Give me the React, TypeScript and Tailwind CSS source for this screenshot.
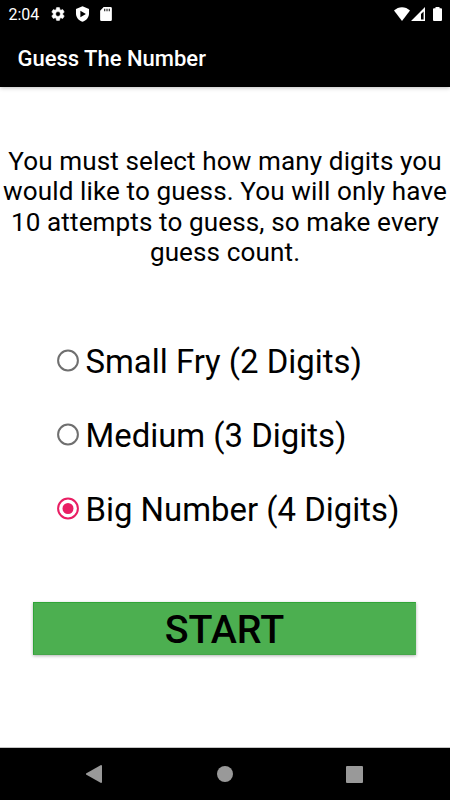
import { useState } from 'react';

const options = [
  { id: 'small', label: 'Small Fry (2 Digits)' },
  { id: 'medium', label: 'Medium (3 Digits)' },
  { id: 'big', label: 'Big Number (4 Digits)' },
];

function StatusBar() {
  return (
    <div className="flex h-[28px] items-center bg-black text-white">
      <span className="ml-[8.5px] w-[32px] pt-px text-[16px]">2:04</span>
      <svg className="ml-[9.5px] size-4" viewBox="0 0 24 24" fill="currentColor">
        <path
          fillRule="evenodd"
          stroke="currentColor"
          strokeWidth="0.8"
          d="M19.14 12.94a7 7 0 0 0 .06-.94 7 7 0 0 0-.07-.94l2.03-1.58a.5.5 0 0 0 .12-.61l-1.92-3.32a.5.5 0 0 0-.59-.22l-2.39.96a7 7 0 0 0-1.62-.94l-.36-2.54a.5.5 0 0 0-.48-.41h-3.84a.5.5 0 0 0-.47.41l-.36 2.54a7 7 0 0 0-1.62.94l-2.39-.96a.5.5 0 0 0-.59.22L2.74 8.87a.5.5 0 0 0 .12.61l2.03 1.58a7 7 0 0 0 0 1.88l-2.03 1.58a.5.5 0 0 0-.12.61l1.92 3.32c.12.22.37.29.59.22l2.39-.96c.5.38 1.03.7 1.62.94l.36 2.54c.05.24.24.41.48.41h3.84c.24 0 .44-.17.47-.41l.36-2.54a7 7 0 0 0 1.62-.94l2.39.96c.22.08.47 0 .59-.22l1.92-3.32a.5.5 0 0 0-.12-.61zM12 15.6A3.6 3.6 0 1 1 12 8.4a3.6 3.6 0 0 1 0 7.2z"
        />
      </svg>
      <svg className="ml-2 h-4 w-[17px]" viewBox="0 0 24 24" preserveAspectRatio="none" fill="currentColor" fillRule="evenodd">
        <path d="M12 .5 2.8 4.5v6.7c0 5.7 3.9 11 9.2 12.3 5.3-1.3 9.2-6.6 9.2-12.3V4.5zM9 7.2v9.6l7.8-4.8z" />
      </svg>
      <svg className="ml-[7px] h-4 w-4" viewBox="0 0 24 24" preserveAspectRatio="none" fill="currentColor">
        <path d="M18.8 1.5H8.5L3.2 7v13.5a2 2 0 0 0 2 2h13.6a2 2 0 0 0 2-2v-17a2 2 0 0 0-2-2z" />
        <path fill="#000" fillOpacity="0.75" d="M9 4h2v4H9zM12.5 4h2v4h-2zM16 4h2v4h-2z" />
      </svg>
      <svg className="ml-auto h-[14px] w-4" viewBox="0 0 16 14" fill="currentColor">
        <path d="M8 14 0 3.6C4.5-.9 11.5-.9 16 3.6z" />
      </svg>
      <svg className="ml-[1px] size-[14px]" viewBox="0 0 14 14" fill="currentColor" fillRule="evenodd">
        <path d="M14 0v14H0zM12.6 4.5 10 7v5.6h2.6z" />
      </svg>
      <svg className="mr-2 ml-2 h-[14px] w-[9px]" viewBox="0 0 9 14" fill="currentColor">
        <path d="M2.5 0h4v1.3H8a1 1 0 0 1 1 1V13a1 1 0 0 1-1 1H1a1 1 0 0 1-1-1V2.3a1 1 0 0 1 1-1h1.5z" />
      </svg>
    </div>
  );
}

function Radio({ checked }: { checked: boolean }) {
  return (
    <svg className="size-[22px] overflow-visible" viewBox="0 0 22 22">
      <circle cx="11" cy="10.5" r="9.9" fill="none" stroke={checked ? '#e91e63' : '#6f6f6f'} strokeWidth="2" />
      {checked && <circle cx="11" cy="10.5" r="5.5" fill="#e91e63" />}
    </svg>
  );
}

export default function App() {
  const [selected, setSelected] = useState('big');

  return (
    <div className="flex h-[800px] w-[450px] flex-col overflow-hidden bg-white font-['Roboto',sans-serif] text-black">
      <StatusBar />
      <header className="flex h-[59px] items-center bg-black pt-[2px] pl-[17.5px] text-[22px] font-medium text-white shadow-[0_1px_4px_rgba(0,0,0,0.25)]">
        <h1>Guess The Number</h1>
      </header>

      <main className="flex flex-1 flex-col border-b border-[#c4c4c4]">
        <p className="mt-[59px] text-center text-[26.1px] leading-[30.4px] tracking-[0.1px] whitespace-nowrap">
          You must select how many digits you
          <br />
          would like to guess. You will only have
          <br />
          10 attempts to guess, so make every
          <br />
          guess count.
        </p>

        <div className="mt-[56.4px] flex flex-col pl-[57px]">
          {options.map((option) => (
            <button key={option.id} onClick={() => setSelected(option.id)} className="flex h-[74px] items-center">
              <Radio checked={selected === option.id} />
              <span className="ml-[6.5px] pt-[2px] text-[32.9px]">{option.label}</span>
            </button>
          ))}
        </div>

        <button className="mt-[56px] ml-[33px] h-[53px] w-[383px] border border-[#2fa437] border-r-[#4caf50] border-b-[#46a64a] bg-[#4caf50] pt-[3px] text-[39.4px] leading-none font-medium shadow-[0_1px_3px_rgba(0,0,0,0.3)]">
          START
        </button>
      </main>

      <nav className="flex h-[52px] items-center bg-black text-[#999]">
        <svg className="ml-[86px] h-[18px] w-4" viewBox="0 0 16 18" fill="currentColor">
          <path d="M15 0q1 0 1 1v16q0 1-1 1L0 9.4v-.8z" />
        </svg>
        <span className="ml-[115px] size-4 rounded-full bg-[#999]" />
        <span className="ml-[113px] size-[17px] rounded-[1px] bg-[#999]" />
      </nav>
    </div>
  );
}
